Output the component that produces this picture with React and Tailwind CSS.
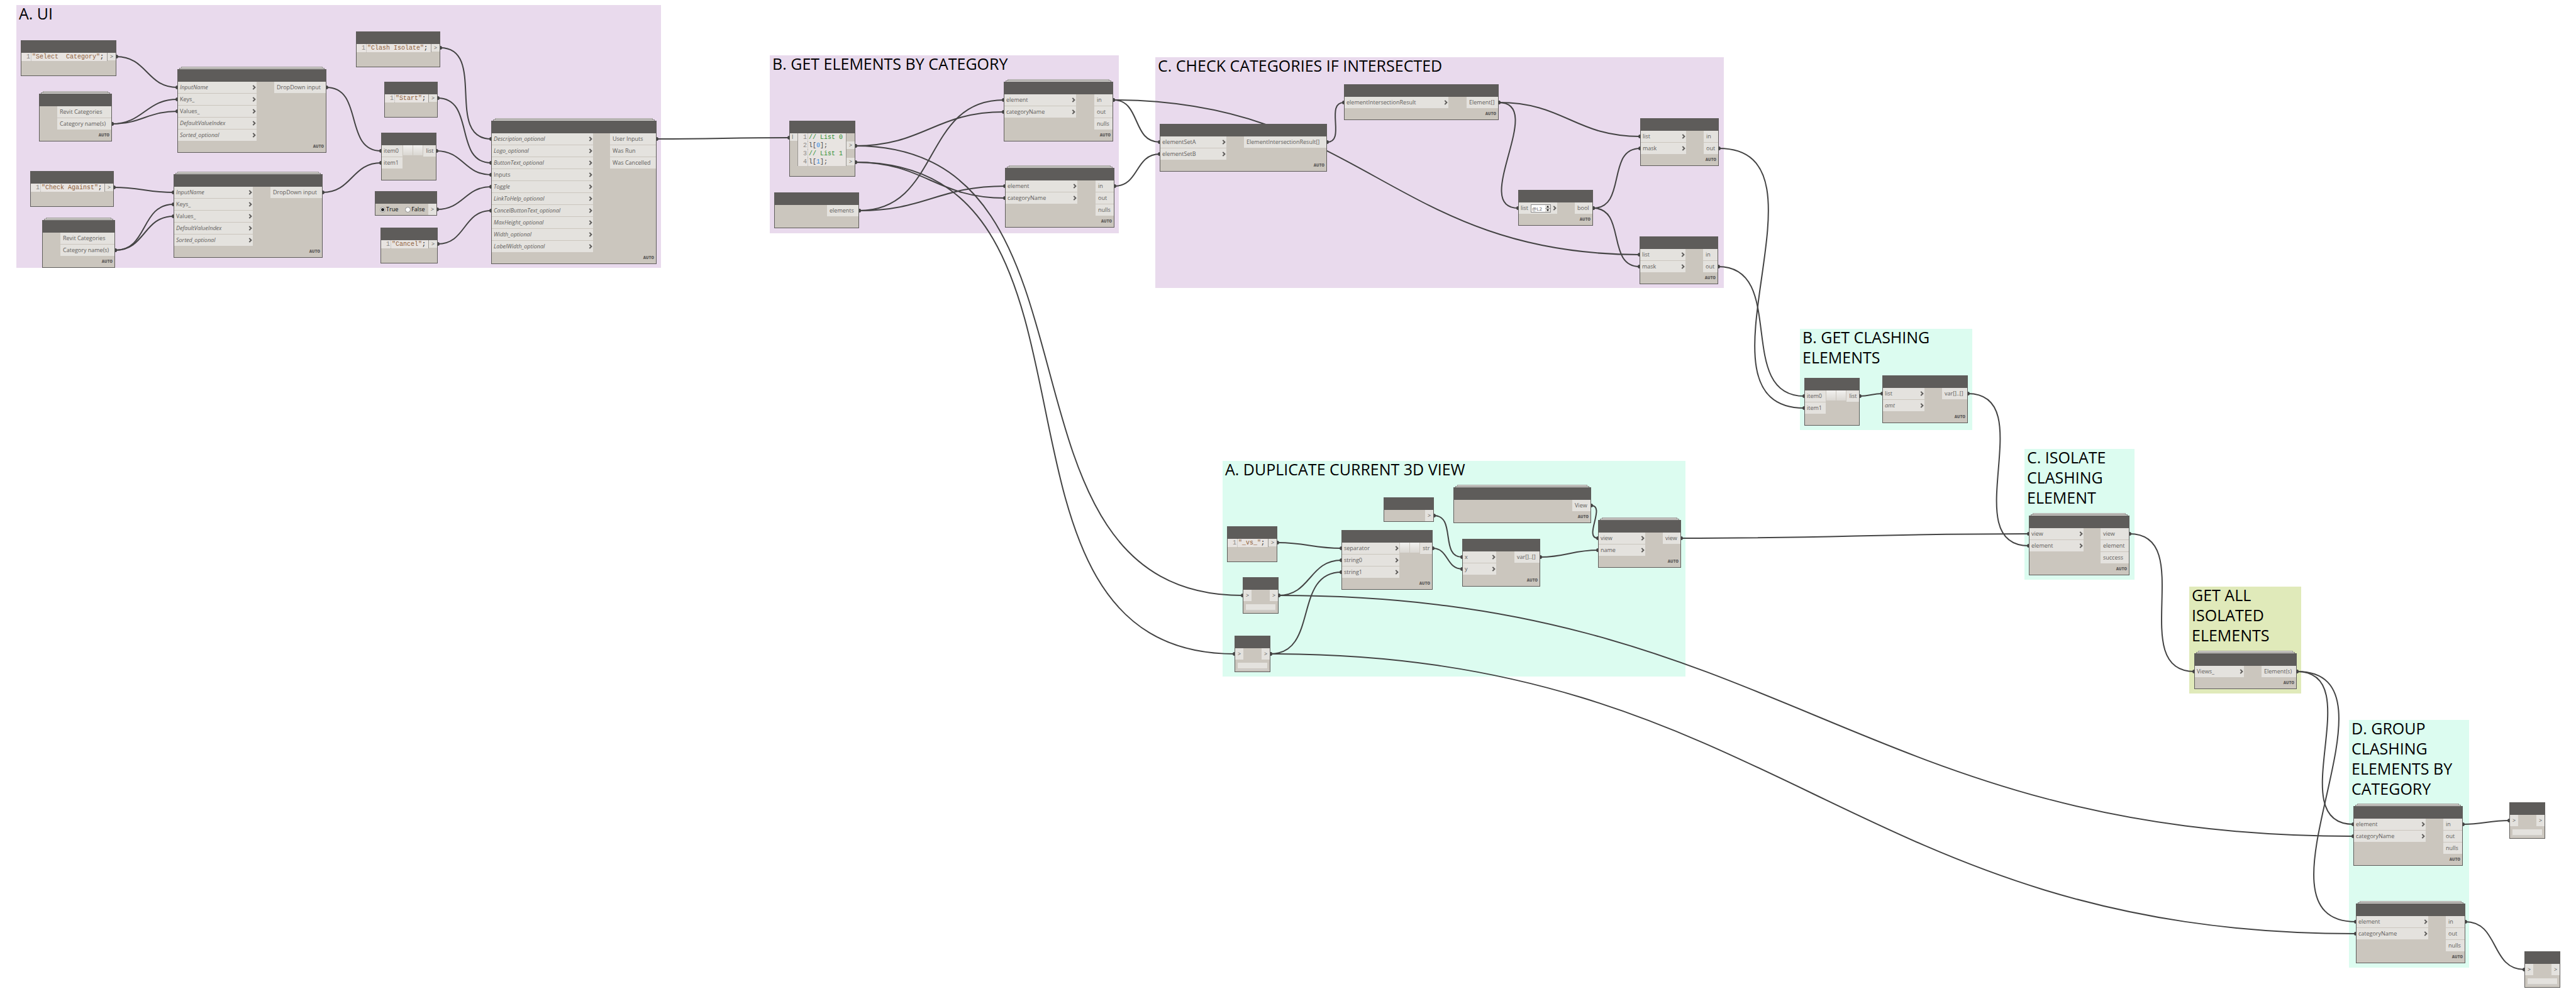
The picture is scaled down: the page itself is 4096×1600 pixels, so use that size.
const groups = [
  { x: 26, y: 8, w: 1025, h: 418, tone: "purple", title: ["A. UI"] },
  { x: 1224, y: 88, w: 555, h: 283, tone: "purple", title: ["B. GET ELEMENTS BY CATEGORY"] },
  { x: 1837, y: 91, w: 904, h: 367, tone: "purple", title: ["C. CHECK CATEGORIES IF INTERSECTED"] },
  { x: 1944, y: 733, w: 736, h: 343, tone: "green", title: ["A. DUPLICATE CURRENT 3D VIEW"] },
  { x: 2862, y: 523, w: 274, h: 161, tone: "green", title: ["B. GET CLASHING", "ELEMENTS"] },
  { x: 3219, y: 714, w: 175, h: 208, tone: "green", title: ["C. ISOLATE", "CLASHING", "ELEMENT"] },
  { x: 3481, y: 933, w: 178, h: 170, tone: "olive", title: ["GET ALL", "ISOLATED", "ELEMENTS"] },
  { x: 3735, y: 1145, w: 191, h: 394, tone: "green", title: ["D. GROUP", "CLASHING", "ELEMENTS BY", "CATEGORY"] },
];

const tones = {
  purple: "bg-[#e9daed]",
  green: "bg-[#dcfcf0]",
  olive: "bg-[#e0eaba]",
};

/* A label that starts with "~" is an optional port and is set in italics. */
const dropDownIn = ["~InputName", "Keys_", "Values_", "~DefaultValueIndex", "~Sorted_optional"];

const nodes = {
  select: { kind: "string", x: 33, y: 64, w: 152, text: '"Select  Category"' },
  revitA: { x: 62, y: 149, w: 116, stack: true, outs: ["Revit Categories", "Category name(s)"], outW: 86 },
  dropA: { x: 282, y: 110, w: 237, stack: true, ins: dropDownIn, inW: 125, outs: ["DropDown input"], outW: 82 },
  check: { kind: "string", x: 48, y: 272, w: 133, text: '"Check Against"' },
  revitB: { x: 67, y: 350, w: 116, stack: true, outs: ["Revit Categories", "Category name(s)"], outW: 86 },
  dropB: { x: 276, y: 277, w: 237, stack: true, ins: dropDownIn, inW: 125, outs: ["DropDown input"], outW: 82 },
  clash: { kind: "string", x: 566, y: 50, w: 134, text: '"Clash Isolate"' },
  start: { kind: "string", x: 611, y: 130, w: 85, text: '"Start"' },
  listA: { x: 606, y: 211, w: 88, ins: ["item0", "item1"], inW: 34, plain: true, steppers: true, outs: ["list"], outW: 20, auto: false },
  toggle: { kind: "boolean", x: 596, y: 304, w: 99 },
  cancel: { kind: "string", x: 605, y: 362, w: 91, text: '"Cancel"' },
  form: {
    x: 781, y: 192, w: 263, stack: true,
    ins: ["~Description_optional", "~Logo_optional", "~ButtonText_optional", "Inputs", "~Toggle", "~LinkToHelp_optional", "~CancelButtonText_optional", "~MaxHeight_optional", "~Width_optional", "~LabelWidth_optional"],
    inW: 161, outs: ["User Inputs", "Was Run", "Was Cancelled"], outW: 73,
  },
  split: { kind: "script", x: 1255, y: 192, w: 105 },
  elements: { x: 1231, y: 306, w: 135, outs: ["elements"], outW: 50, auto: false },
  filterA: { x: 1596, y: 130, w: 174, stack: true, ins: ["element", "categoryName"], inW: 114, outs: ["in", "out", "nulls"], outW: 29 },
  filterB: { x: 1598, y: 267, w: 174, stack: true, ins: ["element", "categoryName"], inW: 114, outs: ["in", "out", "nulls"], outW: 29 },
  intersect: { x: 1844, y: 197, w: 266, ins: ["elementSetA", "elementSetB"], inW: 105, outs: ["ElementIntersectionResult[]"], outW: 131 },
  result: { x: 2137, y: 134, w: 246, ins: ["elementIntersectionResult"], inW: 165, outs: ["Element[]"], outW: 50 },
  maskA: { x: 2608, y: 188, w: 125, ins: ["list", "mask"], inW: 72, outs: ["in", "out"], outW: 23 },
  bool: { x: 2414, y: 302, w: 119, ins: ["list"], inW: 61, level: "@L2", outs: ["bool"], outW: 28 },
  maskB: { x: 2607, y: 376, w: 125, ins: ["list", "mask"], inW: 72, outs: ["in", "out"], outW: 23 },
  versus: { kind: "string", x: 1951, y: 837, w: 80, text: '"_vs_"' },
  watchA: { kind: "watch", x: 1976, y: 918, w: 57 },
  watchB: { kind: "watch", x: 1963, y: 1011, w: 57 },
  join: { x: 2133, y: 843, w: 145, ins: ["separator", "string0", "string1"], inW: 92, steppers: true, outs: ["str"], outW: 19 },
  input: { kind: "input", x: 2200, y: 791, w: 80 },
  view: { x: 2311, y: 775, w: 219, stack: true, outs: ["View"], outW: 29 },
  add: { x: 2325, y: 857, w: 124, ins: ["x", "y"], inW: 53, outs: ["var[]..[]"], outW: 40 },
  duplicate: { x: 2541, y: 827, w: 132, stack: true, ins: ["view", "name"], inW: 74, outs: ["view"], outW: 28 },
  listB: { x: 2869, y: 601, w: 88, ins: ["item0", "item1"], inW: 34, plain: true, steppers: true, outs: ["list"], outW: 20, auto: false },
  flatten: { x: 2993, y: 597, w: 136, ins: ["list", "~amt"], inW: 66, outs: ["var[]..[]"], outW: 40 },
  isolate: { x: 3226, y: 820, w: 160, stack: true, ins: ["view", "element"], inW: 86, outs: ["view", "element", "success"], outW: 45 },
  collect: { x: 3489, y: 1039, w: 163, stack: true, ins: ["Views_"], inW: 78, outs: ["Element(s)"], outW: 55 },
  groupA: { x: 3742, y: 1282, w: 174, stack: true, ins: ["element", "categoryName"], inW: 114, outs: ["in", "out", "nulls"], outW: 30 },
  groupB: { x: 3746, y: 1437, w: 174, stack: true, ins: ["element", "categoryName"], inW: 114, outs: ["in", "out", "nulls"], outW: 30 },
  watchC: { kind: "watch", x: 3990, y: 1276, w: 57 },
  watchD: { kind: "watch", x: 4014, y: 1513, w: 57 },
};

/* Each wire: source node, its output port, target node, its input port. */
const wires = [
  ["select", 0, "dropA", 0], ["revitA", 1, "dropA", 1], ["revitA", 1, "dropA", 2],
  ["check", 0, "dropB", 0], ["revitB", 1, "dropB", 1], ["revitB", 1, "dropB", 2],
  ["dropA", 0, "listA", 0], ["dropB", 0, "listA", 1],
  ["clash", 0, "form", 0], ["start", 0, "form", 2], ["listA", 0, "form", 3],
  ["toggle", 0, "form", 4], ["cancel", 0, "form", 6], ["form", 0, "split", 0],
  ["split", 0, "filterA", 1], ["split", 0, "watchA", 0],
  ["split", 1, "filterB", 1], ["split", 1, "watchB", 0],
  ["elements", 0, "filterA", 0], ["elements", 0, "filterB", 0],
  ["filterA", 0, "intersect", 0], ["filterA", 0, "maskB", 0], ["filterB", 0, "intersect", 1],
  ["intersect", 0, "result", 0], ["result", 0, "maskA", 0], ["result", 0, "bool", 0],
  ["bool", 0, "maskA", 1], ["bool", 0, "maskB", 1],
  ["maskA", 1, "listB", 1], ["maskB", 1, "listB", 0],
  ["versus", 0, "join", 0], ["watchA", 0, "join", 1], ["watchB", 0, "join", 2],
  ["watchA", 0, "groupA", 1], ["watchB", 0, "groupB", 1],
  ["input", 0, "add", 0], ["join", 0, "add", 1],
  ["view", 0, "duplicate", 0], ["add", 0, "duplicate", 1], ["duplicate", 0, "isolate", 0],
  ["listB", 0, "flatten", 0], ["flatten", 0, "isolate", 1],
  ["isolate", 0, "collect", 0], ["collect", 0, "groupA", 0], ["collect", 0, "groupB", 0],
  ["groupA", 0, "watchC", 0], ["groupB", 0, "watchD", 0],
];

function portY(node, index, side) {
  if (node.kind === "string") return node.y + 26;
  if (node.kind === "script") return side === "in" ? node.y + 27 : node.y + 40 + index * 26;
  return node.y + 29 + index * 19;
}

function Wires() {
  return (
    <svg className="absolute inset-0 h-full w-full" fill="none" aria-hidden="true">
      {wires.map(([from, out, to, into]) => {
        const a = nodes[from];
        const b = nodes[to];
        const x1 = a.x + a.w;
        const y1 = portY(a, out, "out");
        const x2 = b.x;
        const y2 = portY(b, into, "in");
        const reach = 0.45 * Math.hypot(x2 - x1, y2 - y1);
        return (
          <g key={`${from}${out}${to}${into}`}>
            <path
              d={`M${x1} ${y1}C${x1 + reach} ${y1} ${x2 - reach} ${y2} ${x2} ${y2}`}
              stroke="#434343"
              strokeWidth="2"
            />
            <circle cx={x1} cy={y1} r="3" fill="#434343" />
            <circle cx={x2} cy={y2} r="3" fill="#434343" />
          </g>
        );
      })}
    </svg>
  );
}

function Chevron() {
  return (
    <svg viewBox="0 0 6 8" className="h-2 w-1.5 shrink-0" fill="none" aria-hidden="true">
      <path d="M1.3 0.9 4.4 4 1.3 7.1" stroke="#5e5c5a" strokeWidth="2" />
    </svg>
  );
}

function Label({ text }) {
  return text.startsWith("~") ? <em>{text.slice(1)}</em> : <span>{text}</span>;
}

function Level({ value }) {
  return (
    <div className="flex h-[13px] w-8 border border-[#8a8a8a] bg-white">
      <input
        aria-label="List level"
        defaultValue={value}
        className="w-0 grow bg-white px-px text-[8px] leading-[11px] text-[#5e5c5a] outline-none"
      />
      <div className="flex w-2 flex-col bg-[#e4e2de]">
        <button aria-label="Level up" className="flex flex-1 items-center justify-center border-b border-[#8a8a8a]">
          <svg viewBox="0 0 4 3" className="h-[3px] w-1"><path d="M0 3 2 0 4 3Z" fill="#111" /></svg>
        </button>
        <button aria-label="Level down" className="flex flex-1 items-center justify-center">
          <svg viewBox="0 0 4 3" className="h-[3px] w-1"><path d="M0 0 2 3 4 0Z" fill="#111" /></svg>
        </button>
      </div>
    </div>
  );
}

function Steppers() {
  const face = "h-4 w-[15px] bg-linear-to-b from-[#f2f1ef] to-[#dad7d2]";
  return (
    <div className="mx-px flex gap-px">
      <button aria-label="Add port" className={face} />
      <button aria-label="Remove port" className={face} />
    </div>
  );
}

function PortNode({ ins = [], outs = [], inW, outW, plain, level, steppers, auto = true }) {
  return (
    <>
      <div className="flex items-start text-[9px] leading-[18px]">
        <ul className="flex flex-col gap-px" style={{ width: inW }}>
          {ins.map((t) => (
            <li key={t} className="flex h-[18px] items-center bg-[#e4e2de] pr-px pl-[3px]">
              <Label text={t} />
              {level && <div className="ml-1"><Level value={level} /></div>}
              {!plain && <div className="ml-auto"><Chevron /></div>}
            </li>
          ))}
        </ul>
        {steppers && <Steppers />}
        <ul className="ml-auto flex flex-col gap-px" style={{ width: outW }}>
          {outs.map((t) => (
            <li key={t} className="h-[18px] bg-[#e4e2de] pl-1 whitespace-nowrap"><Label text={t} /></li>
          ))}
        </ul>
      </div>
      <footer className="h-[18px] pt-[5px] pr-[3px] text-right text-[6px] leading-[8px] font-extrabold">{auto && "AUTO"}</footer>
    </>
  );
}

const MONO = "font-['Liberation_Mono',monospace]";

function Arrow({ tall = true }) {
  return (
    <span className={`w-[13px] bg-[#e4e2de] text-center text-[9px] ${tall ? "h-[18px] leading-[18px]" : "h-3 leading-3"}`}>&gt;</span>
  );
}

function StringNode({ text }) {
  return (
    <>
      <div className="flex items-start">
        <code className={`flex h-[13px] grow bg-[#e8e4e1] text-[10px] leading-[13px] whitespace-pre ${MONO}`}>
          <span className="w-4 border-r border-dotted border-[#b5b2ae] pr-px text-right text-[#8c8a88]">1</span>
          <span className="pl-px text-[#8f5f3a]">{text}</span>
          <span className="font-bold text-[#434343]">;</span>
        </code>
        <span className="h-[13px] w-px bg-[#9a9793]" />
        <Arrow tall={false} />
      </div>
      <div className="h-[23px]" />
    </>
  );
}

const script = [
  <span className="text-[#2f8f2f]">// List 0</span>,
  <>l[<span className="text-[#2b88e6]">0</span>];</>,
  <span className="text-[#2f8f2f]">// List 1</span>,
  <>l[<span className="text-[#2b88e6]">1</span>];</>,
];

function ScriptNode() {
  return (
    <>
      <div className="flex items-start">
        <span className="h-3 w-3 bg-[#e4e2de] pl-[3px] text-[9px] leading-3">l</span>
        <code className={`grow border-x border-[#9a9793] bg-[#e8e4e1] text-[10px] leading-[13px] whitespace-pre text-[#434343] ${MONO}`}>
          {script.map((line, i) => (
            <span key={i} className="flex">
              <span className="w-4 border-r border-dotted border-[#b5b2ae] pr-px text-right text-[#8c8a88]">{i + 1}</span>
              <span className="pl-px">{line}</span>
            </span>
          ))}
        </code>
        <div className="flex flex-col gap-3.5 pt-[13px]">
          <Arrow tall={false} />
          <Arrow tall={false} />
        </div>
      </div>
      <div className="h-4" />
    </>
  );
}

function BooleanNode() {
  const dot = "size-[9px] appearance-none rounded-full border border-[#8a8a8a] bg-white checked:bg-[radial-gradient(#222_0_2px,#fff_3px)]";
  return (
    <div className="flex h-[18px] items-center text-[9px] leading-[18px] text-black">
      <label className="ml-[7px] flex items-center gap-px">
        <input type="radio" name="toggle" defaultChecked className={dot} />
        True
      </label>
      <label className="ml-[11px] flex items-center gap-px">
        <input type="radio" name="toggle" className={dot} />
        False
      </label>
      <span className="ml-auto flex text-[#5e5c5a]"><Arrow /></span>
    </div>
  );
}

function WatchNode() {
  return (
    <>
      <div className="flex justify-between"><Arrow /><Arrow /></div>
      <div className="px-[3px] pt-[5px] pb-[3px]">
        <div className="mx-px h-[9px] bg-[#e4e2de]" />
        <div className="mt-px h-px bg-[#d2d1d0]" />
      </div>
    </>
  );
}

function InputNode() {
  return <div className="flex h-[18px] justify-end"><Arrow /></div>;
}

function Node({ node }) {
  const { kind, x, y, w, stack } = node;
  return (
    <section className="absolute text-[#5e5c5a]" style={{ left: x, top: y, width: w }}>
      {stack && (
        <>
          <div className="absolute inset-x-[6px] -top-1 h-1 border border-b-0 border-[#a3a19f] bg-[#e4e2de]" />
          <div className="absolute inset-x-[3px] -top-0.5 h-0.5 border border-b-0 border-[#868482] bg-[#e4e2de]" />
        </>
      )}
      <div className="border border-[#5e5c5a] bg-[#cbc6be]">
        <header className="h-[19px] bg-[#5e5c5a]" />
        {!kind && <PortNode {...node} />}
        {kind === "string" && <StringNode text={node.text} />}
        {kind === "script" && <ScriptNode />}
        {kind === "boolean" && <BooleanNode />}
        {kind === "watch" && <WatchNode />}
        {kind === "input" && <InputNode />}
      </div>
    </section>
  );
}

export default function App() {
  return (
    <main className="relative min-h-screen w-full overflow-hidden bg-white font-['Open_Sans','Noto_Sans',sans-serif]">
      {groups.map((g) => (
        <section
          key={g.title.join(" ")}
          className={`absolute ${tones[g.tone]}`}
          style={{ left: g.x, top: g.y, width: g.w, height: g.h }}
        >
          <h2 className="-mt-[3px] pl-1 text-[25px] leading-8 whitespace-nowrap text-black">
            {g.title.map((t) => <span key={t} className="block">{t}</span>)}
          </h2>
        </section>
      ))}
      <Wires />
      {Object.entries(nodes).map(([id, node]) => <Node key={id} node={node} />)}
    </main>
  );
}
